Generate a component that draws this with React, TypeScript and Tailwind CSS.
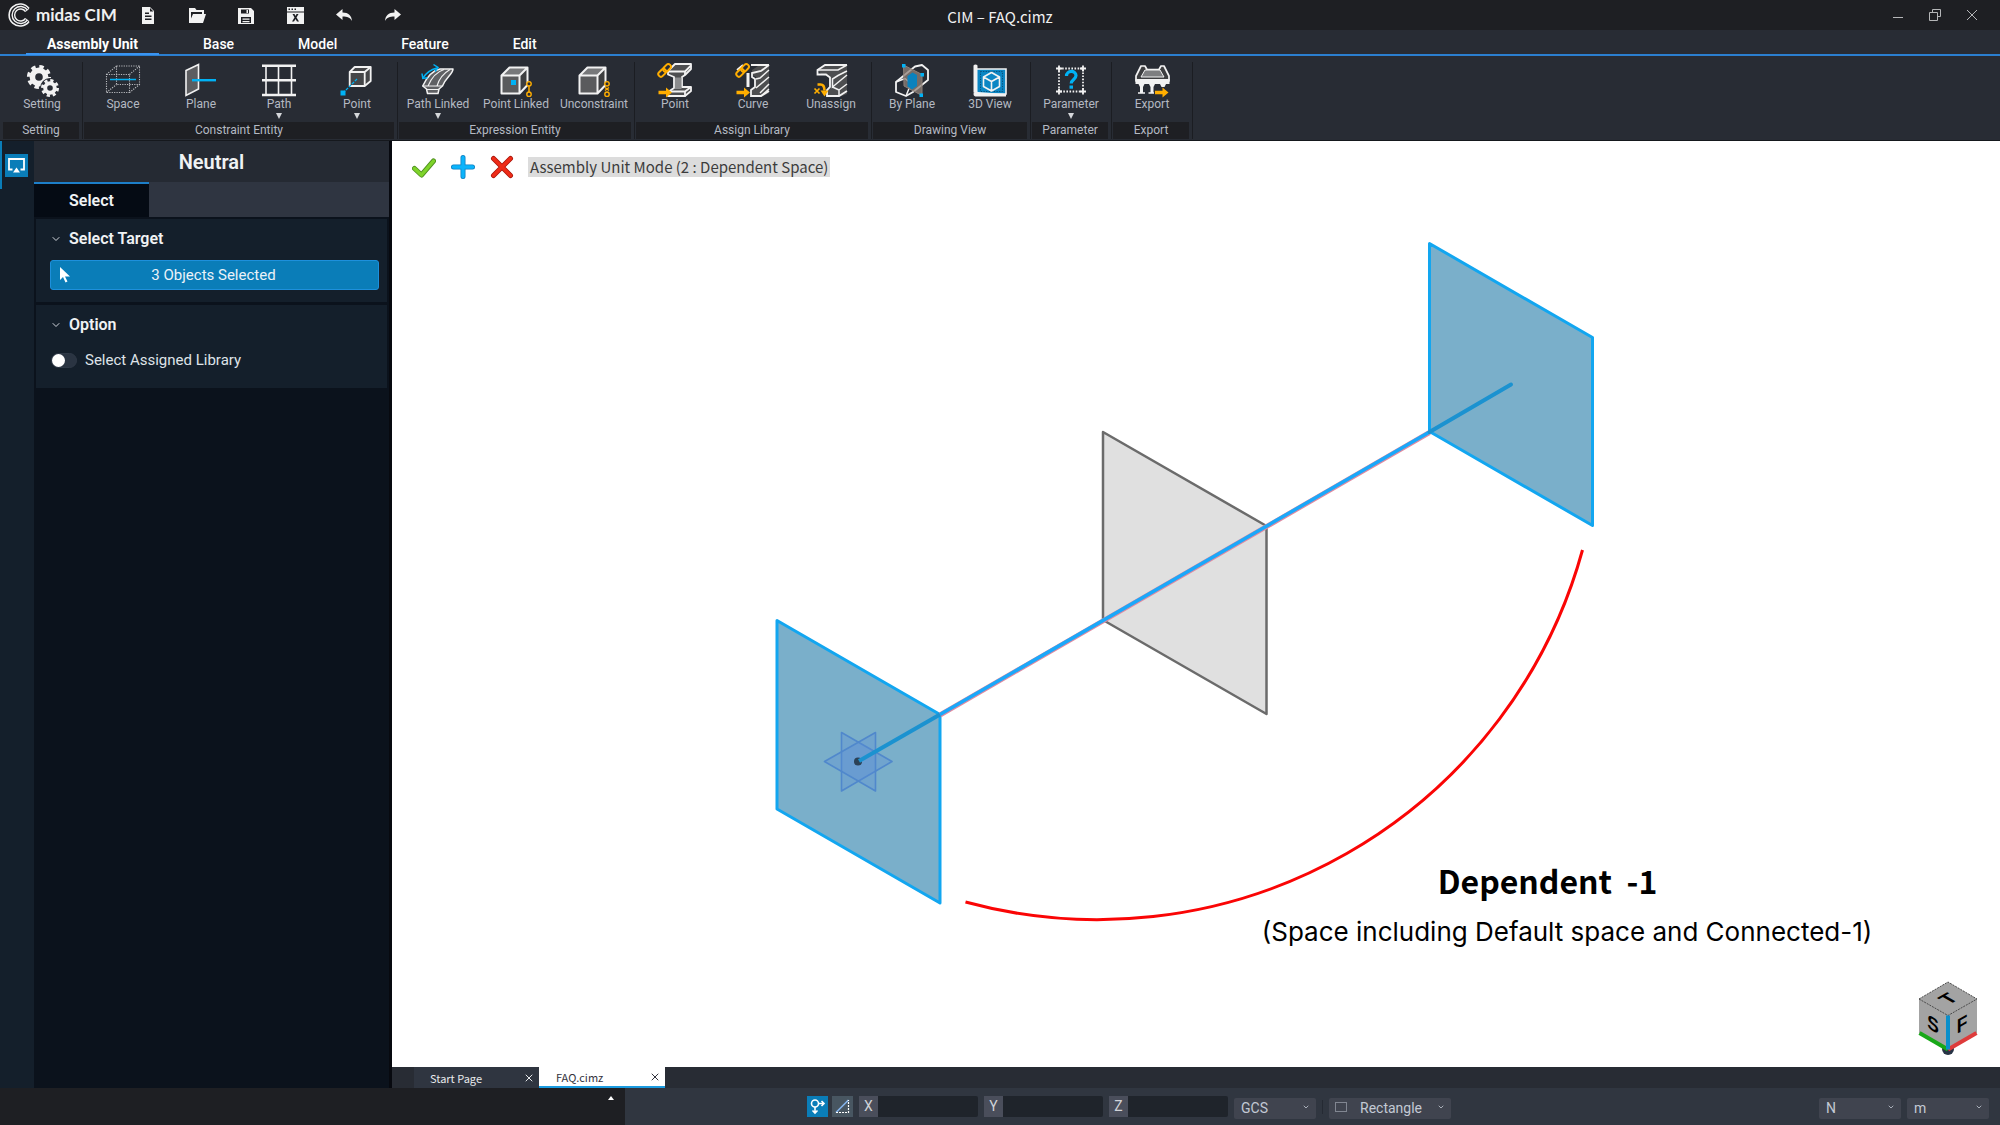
import React from 'react';
import { ChevronDown, X } from 'lucide-react';

const WHITE = '#f2f2f2';
const BLUE = '#00b2f5';
const ORANGE = '#ffae00';

/* ---------- Ribbon icons, all on a 36 x 36 grid ---------- */

const IconBox = ({ children }: { children: React.ReactNode }) => (
  <svg className="w-9 h-9" viewBox="0 0 36 36" fill="none" aria-hidden="true">
    {children}
  </svg>
);

const SettingIcon = () => (
  <IconBox>
    <circle cx="15" cy="15" r="6.6" stroke={WHITE} strokeWidth="5.6" />
    <circle cx="15" cy="15" r="10.4" stroke={WHITE} strokeWidth="3.4" strokeDasharray="4.4 3.77" />
    <circle cx="26" cy="26" r="10" fill="#282c34" />
    <circle cx="26" cy="26" r="4.8" stroke={WHITE} strokeWidth="4" />
    <circle cx="26" cy="26" r="7.6" stroke={WHITE} strokeWidth="2.8" strokeDasharray="3.2 2.77" />
  </IconBox>
);

const SpaceIcon = () => (
  <IconBox>
    <g stroke="#b9bbbf" strokeWidth="1.1" strokeDasharray="1.2 1.2">
      <path d="M1.5 12.5h23v18h-23z" />
      <path d="M11.5 4h23v18.5h-23z" />
      <path d="M1.5 12.5l10-8.5M24.5 12.5l10-8.5M1.5 30.5l10-8M24.5 30.5l10-8" />
    </g>
    <path d="M5 17.5h26" stroke={BLUE} strokeWidth="1.5" />
  </IconBox>
);

const PlaneIcon = () => (
  <IconBox>
    <path d="M3 8.5L15.5 2.5V27L3 33.5z" fill="#5c5d60" stroke={WHITE} strokeWidth="1.6" />
    <path d="M9 18.2h24" stroke={BLUE} strokeWidth="2.4" />
  </IconBox>
);

const PathIcon = () => (
  <IconBox>
    <path d="M1 3.8h34M1 18.3h34M1 33h34" stroke={WHITE} strokeWidth="2.4" />
    <path d="M5 4v29M17.5 4v29M30.5 4v29" stroke={WHITE} strokeWidth="1.6" />
  </IconBox>
);

const PointIcon = () => (
  <IconBox>
    <path d="M10.7 10l5-5h16v14l-6 5h-15z" fill="#454648" stroke={WHITE} strokeWidth="1.8" strokeLinejoin="round" />
    <path d="M10.7 10h15v14M25.7 10l6-5" stroke={WHITE} strokeWidth="1.8" />
    <path d="M4 31l14-14" stroke={BLUE} strokeWidth="1.3" strokeDasharray="3 1.2" />
    <path d="M1.5 28.5h5v5h-5z" fill={BLUE} />
  </IconBox>
);

const PathLinkedIcon = () => (
  <IconBox>
    <path d="M2.7 24C7 15 12 8.5 20 7h13c0 5-7 8-10.5 17l-3.5 3-1 4.5H7.5l-1-4.5z" fill="#606164" stroke={WHITE} strokeWidth="1.5" strokeLinejoin="round" />
    <path d="M2.7 24h19.5M6.5 27.5h12.5M8 24C11 17 16 10 24 7.5M17 24C19 17 24 11 30 7.5" stroke={WHITE} strokeWidth="1.1" />
    <path d="M3 16C6 11 11 7.5 17 6" stroke={BLUE} strokeWidth="1.5" />
    <path d="M13.5 2.5l4.5 3-3 4M2 11.5l.8 5 4.7-.8" stroke={BLUE} strokeWidth="1.5" />
  </IconBox>
);

const SolidCube = () => (
  <>
    <path d="M3.5 13.5l8-8h18V23l-8 8.5h-18z" fill="#77787a" />
    <path d="M21.5 13.5l8-8V23l-8 8.5z" fill="#3d3e40" />
    <path d="M3.5 13.5h18v18h-18z" fill="#5a5b5d" />
    <path d="M3.5 13.5l8-8h18V23l-8 8.5h-18zM3.5 13.5h18v18M21.5 13.5l8-8" stroke={WHITE} strokeWidth="2" strokeLinejoin="round" />
  </>
);

const PointLinkedIcon = () => (
  <IconBox>
    <SolidCube />
    <path d="M13 18h5v5h-5z" fill={BLUE} />
    <path d="M31 23.5v7" stroke={ORANGE} strokeWidth="1.5" />
    <circle cx="31" cy="21.8" r="2.2" stroke={ORANGE} strokeWidth="1.4" fill="#282c34" />
    <circle cx="31" cy="32.2" r="2.2" stroke={ORANGE} strokeWidth="1.4" fill="#282c34" />
  </IconBox>
);

const UnconstraintIcon = () => (
  <IconBox>
    <SolidCube />
    <g stroke={ORANGE} strokeWidth="1.4" fill="#282c34">
      <circle cx="31" cy="21.8" r="2.2" />
      <circle cx="31" cy="32.2" r="2.2" />
      <path d="M29 25.5l4 3M33 25.5l-4 3" />
    </g>
  </IconBox>
);

const ChainLink = () => (
  <g stroke={ORANGE} strokeWidth="2" strokeLinejoin="round">
    <rect x="-4.4" y="-2.6" width="8.8" height="5.2" rx="2.6" transform="translate(10 6) rotate(-45)" />
    <rect x="-4.4" y="-2.6" width="8.8" height="5.2" rx="2.6" transform="translate(5.2 10.8) rotate(-45)" />
  </g>
);

const AssignArrow = () => (
  <path d="M1.5 28.7h7.500V25.500l6 5-6 5v-3.200H1.500z" fill={ORANGE} />
);

const AssignPointIcon = () => (
  <IconBox>
    <path d="M11 12.500V9l7-7h16v5l-6 6-3 2v10h9v4l-6 5H11V30l6-4V15z" fill="#4d4e50" stroke={WHITE} strokeWidth="1.800" strokeLinejoin="round" />
    <path d="M11 9.500h17l6-6M28 9.500V13M11 29.500h17v5M28 29.500l6-4.500" stroke={WHITE} strokeWidth="1.800" />
    <path d="M18 15.500h6.500V27H18z" fill="#8b8c8e" />
    <ChainLink />
    <AssignArrow />
  </IconBox>
);

const AssignCurveIcon = () => (
  <IconBox>
    <path d="M13 11v14" stroke={WHITE} strokeWidth="3" />
    <path d="M17 8l9-6h8v29l-8 4H17V27l4-2V15l-4-2z" fill="#4d4e50" />
    <path d="M2 8l6-5M16 3h18M34 3l-8 6-9 2v4l3 2v8l-4 3v6h10l8-5" stroke={WHITE} strokeWidth="1.800" />
    <path d="M34 8l-9 8-4 1M34 15l-13 11M34 22l-9 9M26 34l8-7" stroke={WHITE} strokeWidth="1.500" />
    <ChainLink />
    <AssignArrow />
  </IconBox>
);

const UnassignIcon = () => (
  <IconBox>
    <path d="M5 8l8-5h21v29l-8 3H13v-6l3-2V15l-8-3z" fill="#4d4e50" />
    <path d="M34 3H12L4.500 8v4.500H13l4 3V25l-3 3v6h12l8-5" stroke={WHITE} strokeWidth="1.800" />
    <path d="M4.500 8H25l9-5M34 9l-9 4.500L19.500 17v8L34 13M26 28l8-6M26 28v6M19.500 25l6.500 3" stroke={WHITE} strokeWidth="1.500" />
    <path d="M1.500 26.500l5 5M6.500 26.500l-5 5" stroke={ORANGE} strokeWidth="1.700" />
    <path d="M4.500 22.500h3c3 0 4 2 4 6" stroke={ORANGE} strokeWidth="2.600" />
    <path d="M7.500 28.500h8l-4 6z" fill={ORANGE} />
  </IconBox>
);

const ByPlaneIcon = () => (
  <IconBox>
    <path d="M2 20L21 4.500l7-1.500 6 5v10L19 30l-7 4-10-4z" stroke={WHITE} strokeWidth="1.800" strokeLinejoin="round" />
    <path d="M2 20l9-3.500 6 5L12 34" stroke={WHITE} strokeWidth="1.500" strokeLinejoin="round" />
    <path d="M9.500 3L28 12.500V33.500L10 24z" fill="#8f8179" fillOpacity=".75" stroke="#8c8079" />
    <path d="M13.500 14l5-3.500L23 13v11l-5 3.500-4.500-3z" fill="#0a82be" />
    <path d="M8 2h3.500v3.500H8zM26.500 11H30v3.500h-3.500zM25.500 31.500H29V35h-3.500z" fill={BLUE} />
  </IconBox>
);

const View3DIcon = () => (
  <IconBox>
    <path d="M4 7h30v25H4z" fill="#0b86c4" stroke={WHITE} strokeWidth="1.600" />
    <path d="M8.500 9.500h22v20h-22z" stroke="#0a4c72" strokeWidth="1" strokeDasharray="1.200 1.400" />
    <path d="M1.500 3.500a2.500 2.500 0 0 1 4 0v27H1.500z" fill={WHITE} />
    <path d="M6 30c-2-1.500-4.500 0-4.500 2s1.500 2.500 3 2.500H34V32" fill={WHITE} />
    <path d="M19.500 10.500l8 4.500v9.500l-8 4.500-8-4.500V15zM11.500 15l8 4.500 8-4.500M19.500 19.500V29" stroke={WHITE} strokeWidth="1.600" strokeLinejoin="round" />
  </IconBox>
);

const ParameterIcon = () => (
  <IconBox>
    <path d="M6 6.500h24v23H6z" stroke={WHITE} strokeWidth="1.800" strokeDasharray="1.600 1.500" />
    <path d="M6 3.500v6M3 6.500h6M30 3.500v6M27 6.500h6M6 26.500v6M3 29.500h6M30 26.500v6M27 29.500h6" stroke={WHITE} strokeWidth="1.800" />
    <path d="M13.500 14c0-6 9.500-6 9.500-.5 0 4-4.800 3.800-4.800 8" stroke={BLUE} strokeWidth="3.200" />
    <path d="M16.500 23.500h3.500v3.200h-3.500z" fill={BLUE} />
  </IconBox>
);

const ExportIcon = () => (
  <IconBox>
    <path d="M2 14l5-10h4l2 3.500h12L27 4h3l5 10v5H2z" fill="#3d3e40" stroke={WHITE} strokeWidth="1.700" strokeLinejoin="round" />
    <path d="M11 8h15l4 7H7z" fill="#7d7e80" stroke={WHITE} strokeWidth="1" />
    <path d="M1.500 17h34v5h-34z" fill={WHITE} />
    <path d="M4 21h7l-2 4v6H6v-6zM14.500 21h7l-2 4v6h-3v-6zM25.500 21h7l-2 4h-3z" fill={WHITE} />
    <path d="M4 31h7M14.500 31H20" stroke={WHITE} strokeWidth="1.400" />
    <path d="M21 28.700h7.500V25.500l6 5-6 5v-3.200H21z" fill={ORANGE} />
  </IconBox>
);

/* ---------- Title bar icons, 18 x 18 ---------- */

const titleActions = [
  { name: 'New', icon: <path fillRule="evenodd" d="M3 1h8l4 4v13H3zM6 6.500h4V8H6zM6 9.500h6.500V11H6zM6 12.500h6.500V14H6zM11 2v3.500h3.500z" fill={WHITE} /> },
  { name: 'Open', icon: <path fillRule="evenodd" d="M1 2h6l1.500 2H16v4h2l-3 9H1zM3 6v6.500L5 8h9V6z" fill={WHITE} /> },
  { name: 'Save', icon: <path fillRule="evenodd" d="M1 2h13l3 3v13H1zM4 3.500v4h8v-4zM9.500 4h1.500v3H9.500zM4 11v6h10v-6zM5.500 12.500h7v1.200h-7zM5.500 15h7v1.200h-7z" fill={WHITE} /> },
  { name: 'Close file', icon: <path fillRule="evenodd" d="M1 1h17v17H1zM2.500 2.500V4H4V2.500zM5.500 2.500V4H7V2.500zM8.500 2.500V4H10V2.500zM1 5.500V6.500H18V5.500zM6.500 8l2 3.500-2.500 4h2l1.500-2.500L11 15.500h2l-2.500-4 2-3.500h-2l-1 2-1-2z" fill={WHITE} /> },
  { name: 'Undo', icon: <path d="M1 8.500L7.500 3v3.500c6 0 9 3 9.500 8.500-2-3.500-4.500-4.500-9.500-4.500V14z" fill={WHITE} /> },
  { name: 'Redo', icon: <path d="M17 8.500L10.500 3v3.500c-6 0-9 3-9.500 8.500 2-3.500 4.500-4.500 9.500-4.500V14z" fill={WHITE} /> },
];

const MENUS = ['Assembly Unit', 'Base', 'Model', 'Feature', 'Edit'];

interface Tool {
  label: string;
  icon: React.ReactNode;
  more?: boolean;
}

const GROUPS: { title: string; tools: Tool[] }[] = [
  { title: 'Setting', tools: [{ label: 'Setting', icon: <SettingIcon /> }] },
  {
    title: 'Constraint Entity',
    tools: [
      { label: 'Space', icon: <SpaceIcon /> },
      { label: 'Plane', icon: <PlaneIcon /> },
      { label: 'Path', icon: <PathIcon />, more: true },
      { label: 'Point', icon: <PointIcon />, more: true },
    ],
  },
  {
    title: 'Expression Entity',
    tools: [
      { label: 'Path Linked', icon: <PathLinkedIcon />, more: true },
      { label: 'Point Linked', icon: <PointLinkedIcon /> },
      { label: 'Unconstraint', icon: <UnconstraintIcon /> },
    ],
  },
  {
    title: 'Assign Library',
    tools: [
      { label: 'Point', icon: <AssignPointIcon /> },
      { label: 'Curve', icon: <AssignCurveIcon /> },
      { label: 'Unassign', icon: <UnassignIcon /> },
    ],
  },
  {
    title: 'Drawing View',
    tools: [
      { label: 'By Plane', icon: <ByPlaneIcon /> },
      { label: '3D View', icon: <View3DIcon /> },
    ],
  },
  { title: 'Parameter', tools: [{ label: 'Parameter', icon: <ParameterIcon />, more: true }] },
  { title: 'Export', tools: [{ label: 'Export', icon: <ExportIcon /> }] },
];

const TitleBar = () => (
  <header className="h-[30px] shrink-0 grid grid-cols-[1fr_auto_1fr] items-center bg-[#1e1f23] text-[#f0f0f0]">
    <div className="flex items-center">
      <div className="w-[123px] pl-2 flex items-center gap-1">
        <svg className="w-6 h-6 shrink-0" viewBox="0 0 24 24" fill="none" stroke={WHITE} aria-hidden="true">
          <path d="M21 5.500A11 11 0 1 0 21 18.500" strokeWidth="1.600" />
          <path d="M19.500 7A8.500 8.500 0 1 0 19.500 17" strokeWidth="1.400" />
          <path d="M17.500 8.500A6 6 0 1 0 17.500 15.500" strokeWidth="1.400" />
          <path d="M21 5.500l-3.500 3M21 18.500l-3.500-3" strokeWidth="1" />
        </svg>
        <span className="font-['Lato',sans-serif] text-[17px] leading-6 font-bold whitespace-nowrap">midas CIM</span>
      </div>
      {titleActions.map(action => (
        <button key={action.name} aria-label={action.name} className="w-[49px] h-[30px] flex items-center justify-center">
          <svg className="w-[18px] h-[18px]" viewBox="0 0 18 18" aria-hidden="true">{action.icon}</svg>
        </button>
      ))}
    </div>
    <h1 className="font-['Noto_Sans_CJK_KR','Noto_Sans',sans-serif] text-[15px] leading-5 pt-1">CIM – FAQ.cimz</h1>
    <div className="flex justify-end pr-[10px] text-[#b5b6b8]">
      <button aria-label="Minimize" className="w-[37px] h-[30px] flex items-center justify-center">
        <svg className="w-3 h-3" viewBox="0 0 12 12" stroke="currentColor"><path d="M1 8.500h10" /></svg>
      </button>
      <button aria-label="Restore" className="w-[37px] h-[30px] flex items-center justify-center">
        <svg className="w-3 h-3" viewBox="0 0 12 12" fill="none" stroke="currentColor">
          <path d="M.5 3.500h8v8h-8zM3.500 3.500v-3h8v7h-3" />
        </svg>
      </button>
      <button aria-label="Close" className="w-[37px] h-[30px] flex items-center justify-center">
        <svg className="w-3 h-3" viewBox="0 0 12 12" stroke="currentColor"><path d="M1 1l10 10M11 1L1 11" /></svg>
      </button>
    </div>
  </header>
);

const MenuBar = () => (
  <nav className="h-[26px] shrink-0 flex pl-[14px] bg-[#282c34] border-b-2 border-[#2b7fd0]">
    {MENUS.map((menu, i) => (
      <button
        key={menu}
        className={`relative h-6 pt-1 text-sm leading-5 text-white ${i === 0 ? 'w-[157px] font-bold' : 'px-8 font-medium'}`}
      >
        {menu}
        {i === 0 && <span className="absolute left-3 right-3 -bottom-px h-0.5 bg-[#3a94f0]" />}
      </button>
    ))}
  </nav>
);

const Ribbon = () => (
  <div className="h-[85px] shrink-0 flex items-stretch pl-[3px] pb-px bg-[#282c34] border-b border-[#15181d] text-xs text-[#b4b9c2]">
    {GROUPS.map(group => (
      <React.Fragment key={group.title}>
        <section className="flex flex-col justify-between">
          <div className="flex">
            {group.tools.map(tool => (
              <button key={tool.label} className="w-[78px] pt-[6px] flex flex-col items-center">
                {tool.icon}
                <span className="h-[15px] leading-3 whitespace-nowrap">{tool.label}</span>
                {tool.more && (
                  <svg className="w-[6px] h-[6px]" viewBox="0 0 6 6" aria-hidden="true">
                    <path d="M0 0h6L3 6z" fill="#d5d7da" />
                  </svg>
                )}
              </button>
            ))}
          </div>
          <h2 className="h-[17px] mr-0.5 leading-[17px] text-center bg-[#1e1f23]">{group.title}</h2>
        </section>
        <div className="w-px mx-px mt-1.5 bg-[#1b1d22]" />
      </React.Fragment>
    ))}
  </div>
);

const SectionTitle = ({ children }: { children: React.ReactNode }) => (
  <h3 className="flex items-center gap-[7px] text-base leading-5 font-semibold text-[#f0f2f4]">
    <ChevronDown size={12} className="text-gray-300" />
    {children}
  </h3>
);

const SidePanel = () => (
  <aside className="w-[392px] shrink-0 flex bg-[#0b121c] border-r-3 border-[#07090f]">
    <div className="w-[34px] shrink-0 bg-[#141f2b]">
      <div className="h-12 pl-[3px] border-l-2 border-[#0a7db8] flex items-center">
        <button aria-label="Task panel" className="w-[23px] h-[23px] bg-[#0a7db8] flex items-center justify-center">
          <svg className="w-[17px] h-4" viewBox="0 0 17 16" fill="none" aria-hidden="true">
            <path d="M4.500 12.500H1V2h15v10.500h-3.500" stroke="#fff" strokeWidth="1.800" />
            <path d="M5 15.500l3.500-5 3.500 5z" fill="#fff" />
          </svg>
        </button>
      </div>
    </div>
    <div className="flex-1">
      <h2 className="h-[41px] leading-[42px] text-center text-xl/[42px] font-semibold text-[#f0f2f4] bg-[#252a33]">Neutral</h2>
      <div className="h-[35px] flex bg-[#2f3541]" role="tablist">
        <button role="tab" aria-selected="true" className="w-[115px] bg-[#050b14] border-t-2 border-[#1d7fc9] text-base font-semibold text-[#f0f2f4]">
          Select
        </button>
      </div>
      <div className="p-0.5 flex flex-col gap-[3px]">
        <section className="h-[83px] pl-3.5 pr-2 pt-[10px] bg-[#141f2b]">
          <SectionTitle>Select Target</SectionTitle>
          <button className="mt-[11px] w-full h-[30px] flex items-center px-[9px] rounded-[3px] border border-[#1d90dc] bg-[#0a7db8] text-[15px] text-[#eaf2f8]">
            <svg className="w-[10px] h-4" viewBox="0 0 10 16" aria-hidden="true">
              <path d="M0 0v13l3-3 2.500 5.500 2-1L5 9.500h5z" fill="#fff" />
            </svg>
            <span className="flex-1 text-center pr-3">3 Objects Selected</span>
          </button>
        </section>
        <section className="h-[83px] pl-3.5 pt-[10px] bg-[#141f2b]">
          <SectionTitle>Option</SectionTitle>
          <label className="mt-[15px] pl-px flex items-center gap-2 text-[15px] leading-5 text-[#dfe3e8]">
            <input type="checkbox" className="peer sr-only" />
            <span className="w-[26px] h-[15px] rounded-full border border-[#2f3947] bg-[#2a3442]">
              <span className="block w-[13px] h-[13px] rounded-full bg-white" />
            </span>
            Select Assigned Library
          </label>
        </section>
      </div>
    </div>
  </aside>
);

const Scene = () => (
  <svg className="absolute inset-0 w-full h-full" viewBox="392 141 1608 926" fill="none" aria-hidden="true">
    {/* middle (unselected) plane */}
    <path d="M1103 432l163.500 94v188L1103 620z" fill="#e0e0e0" stroke="#6b6b6b" strokeWidth="2.500" strokeLinejoin="round" />

    {/* selected planes */}
    <g fill="#7aafca" stroke="#12a6f0" strokeWidth="3" strokeLinejoin="round">
      <path d="M777 620.500l163 94V903l-163-94z" />
      <path d="M1429.500 243.500l163 94v188l-163-94z" />
    </g>

    {/* origin marker */}
    <g fill="#5a8cd8" fillOpacity=".3" stroke="#5088cc" strokeWidth="1.600" strokeLinejoin="round">
      <path d="M841.500 732.500l50.500 29-50.500 29.500z" />
      <path d="M875.500 732.500L824.500 761.500l51 29.500z" />
    </g>

    {/* path through the spaces */}
    <path d="M940 715l489.500-282.500" stroke="#e08aa0" strokeWidth="5" />
    <path d="M940 714.500l489.500-282.500" stroke="#1aa8fa" strokeWidth="3.500" />
    <path d="M1429.500 432l81.500-47.500" stroke="#1b92d0" strokeWidth="4" strokeLinecap="round" />
    <circle cx="858" cy="761.500" r="4" fill="#2c4156" />
    <path d="M859 761l81-46.500" stroke="#1b92d0" strokeWidth="4" />

    {/* annotation arc */}
    <path d="M965.500 902A503 503 0 0 0 1582.500 550" stroke="#fa0505" strokeWidth="3" />

    {/* view cube */}
    <circle cx="1948" cy="1049" r="6" fill="#283445" />
    <path d="M1919 999l29-17 29 17v34l-29 17-29-17z" fill="#a3a3a3" />
    <path d="M1919 999l29-17 29 17-29 16.500z" stroke="#4b4b4b" strokeWidth="1" strokeDasharray="2 1" />
    <path d="M1919.500 1033l28.500 16.500" stroke="#18a818" strokeWidth="4" />
    <path d="M1976.500 1033l-28.500 16.500" stroke="#de3b3b" strokeWidth="4" />
    <path d="M1948 1015.500v34" stroke="#0a8fcb" strokeWidth="4" />
    <g fill="#000" fontFamily="Liberation Sans" fontWeight="700" fontSize="20" textAnchor="middle">
      <text transform="matrix(.87 .5 0 1 1933 1031)">S</text>
      <text transform="matrix(.87 -.5 0 1 1962 1031)">F</text>
      <text transform="matrix(.87 -.5 .87 .5 1954 1002)">T</text>
    </g>
  </svg>
);

const Viewport = () => (
  <main className="relative flex-1 bg-white overflow-hidden">
    <Scene />
    <div className="relative flex items-center pl-[20px] pt-[14px]">
      <div className="flex gap-[15px]">
        <button aria-label="Apply" className="w-6 h-6">
          <svg viewBox="0 0 24 24" fill="none" strokeLinecap="round" strokeLinejoin="round">
            <path d="M2.500 13.500l7 6.500L21.500 6" stroke="#4f8f1f" strokeWidth="5" />
            <path d="M2.500 13.500l7 6.500L21.500 6" stroke="#7ed32a" strokeWidth="3.400" />
          </svg>
        </button>
        <button aria-label="Add" className="w-6 h-6">
          <svg viewBox="0 0 24 24" fill="none" strokeLinecap="round">
            <path d="M12 2.500v19M2.500 12h19" stroke="#0c7fc0" strokeWidth="5" />
            <path d="M12 2.500v19M2.500 12h19" stroke="#0cb4fb" strokeWidth="3.400" />
          </svg>
        </button>
        <button aria-label="Cancel" className="w-6 h-6">
          <svg viewBox="0 0 24 24" fill="none" strokeLinecap="round">
            <path d="M3.500 3.500l17 17M20.500 3.500l-17 17" stroke="#a81408" strokeWidth="5" />
            <path d="M3.500 3.500l17 17M20.500 3.500l-17 17" stroke="#ee2c18" strokeWidth="3.400" />
          </svg>
        </button>
      </div>
      <p className="ml-[14px] px-0.5 h-5 leading-5 bg-[#dcdcdc] text-[#3c3c3c] text-[15px] font-['Noto_Sans_CJK_KR','Noto_Sans',sans-serif]">
        Assembly Unit Mode (2 : Dependent Space)
      </p>
    </div>
    <div className="absolute right-[8.6%] bottom-[12.8%] w-[600px] text-black">
      <p className="pl-[176px] text-[32px] leading-10 font-bold whitespace-pre font-['Noto_Sans_CJK_KR','Noto_Sans',sans-serif]">Dependent  -1</p>
      <p className="mt-4 text-[26px] leading-8 whitespace-nowrap font-['Inter',sans-serif]">(Space including Default space and Connected-1)</p>
    </div>
  </main>
);

const DocumentTabs = () => (
  <div className="h-[21px] shrink-0 flex pl-[22px] bg-[#282c34] font-['Noto_Sans_CJK_KR','Noto_Sans',sans-serif] text-[11px]">
    <div className="w-[125px] pl-4 pr-1 flex items-center justify-between bg-[#2f3540] text-[#e8eaec]">
      <button className="leading-5">Start Page</button>
      <button aria-label="Close Start Page"><X size={12} /></button>
    </div>
    <div className="w-[126px] pl-[17px] pr-1 flex items-center justify-between bg-white border-b-2 border-[#1a9be0] text-[#33333d]">
      <button className="leading-5">FAQ.cimz</button>
      <button aria-label="Close FAQ.cimz"><X size={12} /></button>
    </div>
  </div>
);

const CoordField = ({ axis }: { axis: string }) => (
  <label className="flex items-center h-[21px] text-sm text-[#d0d3d8]">
    <span className="w-[19px] h-full leading-[21px] text-center bg-[#4a4e5b]">{axis}</span>
    <input type="text" className="w-[100px] h-full rounded-r-[2px] bg-[#1f242b] outline-none px-1" />
  </label>
);

const StatusSelect = ({ label, value, wide }: { label: string; value: string; wide?: boolean }) => (
  <div className={`relative h-[21px] ${wide ? 'w-[122px]' : 'w-[82px]'}`}>
    <select
      aria-label={label}
      defaultValue={value}
      className={`w-full h-full appearance-none rounded-[2px] bg-[#40444f] text-sm leading-[21px] text-[#c3c9d4] outline-none ${wide ? 'pl-[31px]' : 'pl-[7px]'}`}
    >
      <option>{value}</option>
    </select>
    {wide && (
      <svg className="absolute left-[6px] top-[5px] w-3 h-3 pointer-events-none" viewBox="0 0 12 12" fill="none">
        <path d="M.5 1.500h11v9H.5z" stroke="#c3c9d4" strokeDasharray="1 1" />
      </svg>
    )}
    <ChevronDown size={8} strokeWidth={3} className="absolute right-[6px] top-[7px] text-[#a9afb9] pointer-events-none" />
  </div>
);

const StatusBar = () => (
  <footer className="h-[37px] shrink-0 flex bg-[#303640]">
    <div className="w-[625px] shrink-0 bg-[#1e1f23] flex justify-end pr-[11px] pt-2">
      <button aria-label="Expand log" className="w-[6px] h-1">
        <svg viewBox="0 0 6 4"><path d="M0 4l3-4 3 4z" fill="#fff" /></svg>
      </button>
    </div>
    <div className="flex-1 flex items-center justify-between pl-[182px] pr-[11px]">
      <div className="flex items-center gap-[6px]">
        <div className="flex gap-1">
          <button aria-label="Snap" className="w-[21px] h-[21px] bg-[#0a7db8]">
            <svg viewBox="0 0 21 21" fill="none" stroke="#fff" strokeWidth="1.600">
              <circle cx="8" cy="7.500" r="3.500" />
              <path d="M8 11v6M5.500 14.500L8 17l2.500-2.500M11.500 7.500h5M14.500 5l2.500 2.500-2.500 2.500" />
            </svg>
          </button>
          <button aria-label="Ortho" className="w-[21px] h-[21px] bg-[#485661]">
            <svg viewBox="0 0 21 21" fill="none">
              <path d="M4 16.500L16.500 4" stroke="#86b4ec" strokeWidth="1.600" />
              <path d="M4 16.500h12.500V4" stroke="#fff" strokeWidth="1.200" strokeDasharray="2 1" />
            </svg>
          </button>
        </div>
        <CoordField axis="X" />
        <CoordField axis="Y" />
        <CoordField axis="Z" />
        <StatusSelect label="Coordinate system" value="GCS" />
        <div className="w-px h-[14px] bg-[#252a33]" />
        <StatusSelect label="Selection shape" value="Rectangle" wide />
      </div>
      <div className="flex gap-[6px]">
        <StatusSelect label="Force unit" value="N" />
        <StatusSelect label="Length unit" value="m" />
      </div>
    </div>
  </footer>
);

export default function App() {
  return (
    <div className="h-screen flex flex-col overflow-hidden bg-[#282c34] font-['Roboto',sans-serif]">
      <TitleBar />
      <MenuBar />
      <Ribbon />
      <div className="flex-1 min-h-0 flex">
        <SidePanel />
        <div className="flex-1 min-w-0 flex flex-col">
          <Viewport />
          <DocumentTabs />
        </div>
      </div>
      <StatusBar />
    </div>
  );
}
